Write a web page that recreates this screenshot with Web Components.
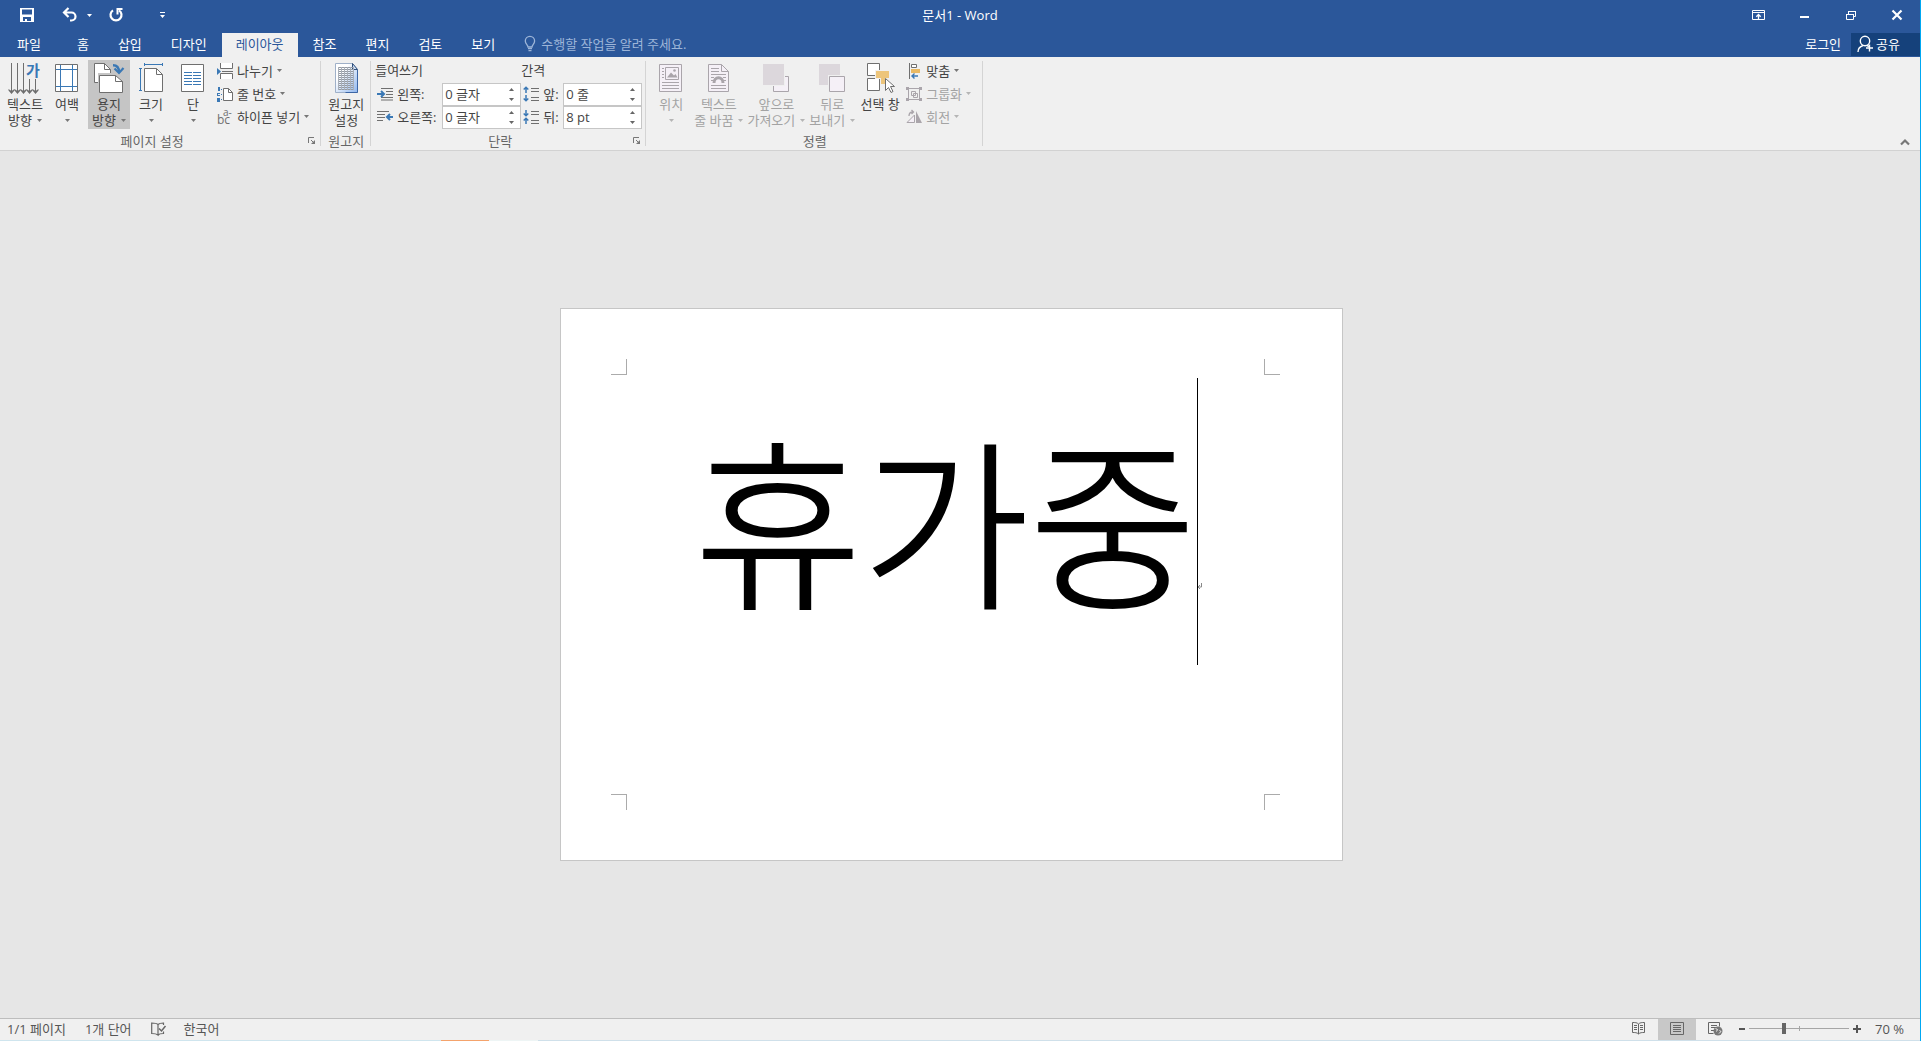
<!DOCTYPE html>
<html lang="ko">
<head>
<meta charset="utf-8">
<title>문서1 - Word</title>
<style>
  html, body { height: 100%; margin: 0; }
  body { font: 13px/16px "Open Sans", "Noto Sans CJK KR", sans-serif; color: #444; overflow: hidden; }
</style>
</head>
<body>
<word-window></word-window>

<script>
const RESET = `
  *, *::before, *::after { box-sizing: border-box; }
  :host { box-sizing: border-box; }
  button, input { font: inherit; color: inherit; margin: 0; border: 0; padding: 0; background: none; border-radius: 0; }
  button { cursor: default; }
  a { color: inherit; text-decoration: none; }
`;

function define(name, html, setup) {
  const template = document.createElement('template');
  template.innerHTML = html;
  customElements.define(name, class extends HTMLElement {
    constructor() {
      super();
      this.attachShadow({ mode: 'open' }).append(template.content.cloneNode(true));
    }
    connectedCallback() { if (setup) setup(this, this.shadowRoot); }
  });
}

/* Each entry: [width, height, drawing] */
const G = '#6f6f6f', B = '#3a78b5', D = '#aaa5ab', L = '#f5f0f7';
const arrowDown = (x, y) => `<path fill="${G}" d="M${x - 3} ${y - 4}l3 2 3-2v1.500l-3 3.500-3-3.500z"/>`;
const gridCells = () => {
  let s = '';
  for (let y = 5.5; y < 28; y += 4) s += `<path d="M8 ${y}h16M8 ${y + 2}h16" stroke="#949aa3"/>`;
  for (let x = 8.5; x < 25; x += 3) s += `<path d="M${x} 5v23" stroke="#a9afb8"/>`;
  return s;
};
const ICONS = {
  save: [16, 16, `<path fill="#fff" fill-rule="evenodd" d="M1 1h14v14H1zM3 2.500v5h10v-5zM4 10v4h2v-2h2v2h4v-4z"/>`],
  undo: [16, 16, `<path fill="none" stroke="#fff" stroke-width="2.200" d="M2 5.500h7.500a4 4 0 0 1 0 8H8M6.500 1 2 5.500l4.500 4.500"/>`],
  redo: [16, 16, `<path fill="none" stroke="#fff" stroke-width="2.200" d="M5 3.300a5.500 5.500 0 1 0 6 0"/><path fill="none" stroke="#fff" stroke-width="2" d="M14.500 2H9.500v5.500"/>`],
  custom: [7, 7, `<path fill="#fff" d="M1 0h5v1H1zM1 3h5L3.500 6z"/>`],
  caret: [5, 3, `<path fill="currentColor" d="M0 0h5L2.500 3z"/>`],
  ribbonopts: [14, 12, `<path fill="none" stroke="#fff" d="M.5 1.500h12v9H.5zM.5 3.500h12"/><path fill="none" stroke="#fff" stroke-width="1.300" d="M6.500 10V5.500M4.300 7.700l2.200-2.200 2.200 2.200"/>`],
  min: [10, 10, `<path fill="#fff" d="M0 6h9v2H0z"/>`],
  restore: [11, 11, `<path fill="none" stroke="#fff" d="M.5 4.500h7v5h-7zM2.500 4V1.500h7v5H8"/><path fill="#fff" d="M0 4h8v1H0zM2 1h8v1H2z"/>`],
  close: [12, 12, `<path stroke="#fff" stroke-width="2.200" d="M1.500 1.500l9 9M10.500 1.500l-9 9"/>`],
  bulb: [12, 16, `<path fill="none" stroke="#9db5d8" stroke-width="1.300" d="M4 11c0-2-2.700-3-2.700-6a4.600 4.600 0 0 1 9.300 0c0 3-2.600 4-2.600 6z"/><path stroke="#9db5d8" stroke-width="1.200" d="M4 12.700h4M4.500 14.700h3"/>`],
  share: [17, 18, `<circle cx="8" cy="6" r="4.700" fill="none" stroke="#fff" stroke-width="1.400"/><path fill="none" stroke="#fff" stroke-width="1.400" d="M1 17c0-4 2-5.500 5-6.500M10 10.500l2 1"/><path stroke="#fff" stroke-width="1.400" d="M12.500 9.500v7M9 13h7"/>`],

  textdir: [32, 32, `<path stroke="${G}" d="M2.500 1v29M8.500 1v29M14.500 1v29M20.500 17v13M26.500 17v13"/>${[2.5, 8.5, 14.5, 20.5, 26.5].map(x => arrowDown(x, 31)).join('')}<text x="17" y="14" font-size="15" font-weight="700" fill="${B}" font-family="Noto Sans CJK KR, sans-serif">가</text>`],
  margins: [32, 32, `<path fill="#fff" stroke="${G}" d="M4.500 2.500h22v27h-22z"/><path stroke="${B}" d="M9.500 3v26M21.500 3v26M5 7.500h21M5 24.500h21"/>`],
  orient: [32, 32, `<path fill="#fff" stroke="${G}" d="M1.500 20.500v-19h10l6 6v13z"/><path fill="none" stroke="${G}" d="M11.500 1.500v6h6"/><path fill="#c5c5c5" d="M5 11h15v3h-13v16H5z"/><path fill="#fff" stroke="${G}" d="M6.500 30.500v-17h16l7 6v11z"/><path fill="none" stroke="${G}" d="M22.500 13.500v6h7"/><path fill="none" stroke="${B}" stroke-width="2.400" d="M20 3.200c4 0 6 1.800 6 7"/><path fill="none" stroke="${B}" stroke-width="2.200" d="M21.500 6.500l4.500 4.500 4.500-5"/>`],
  size: [32, 32, `<path fill="#fff" stroke="${G}" d="M9.500 29.500v-23h12l6 6v17z"/><path fill="none" stroke="${G}" d="M21.500 6.500v6h6"/><path fill="none" stroke="${B}" d="M9 2.500h19M9.500 1v3M27.500 1v3M5.500 6v23M4 6.500h3M4 28.500h3"/>`],
  columns: [32, 32, `<path fill="#fff" stroke="${G}" d="M4.500 2.500h22v27h-22z"/><path stroke="${B}" d="M7 10.500h8M7 13.500h8M7 16.500h8M7 19.500h8M7 22.500h8M16 10.500h8M16 13.500h8M16 16.500h8M16 19.500h8M16 22.500h8"/>`],
  manuscript: [32, 32, `<defs><linearGradient id="g" x1="0" y1="0" x2="1" y2="1"><stop offset=".3" stop-color="#fff"/><stop offset="1" stop-color="#8fb6ee"/></linearGradient></defs><path fill="url(#g)" stroke="#9fb0c8" d="M5.500 30.500v-29h17l5 6v23z"/><path fill="none" stroke="#3c66a5" d="M27.500 8v22.500h-12"/><path fill="#cfe0f7" stroke="#2f4f7c" d="M22.500 1.500v6h5z"/>${gridCells()}`],
  position: [32, 32, `<path fill="${L}" stroke="${D}" d="M4.500 2.500h22v27h-22z"/><path fill="${L}" stroke="${D}" d="M10.500 5.500h13v12h-13z"/><path fill="${D}" d="M12 15.500l4-5 3 3 1.500-1.500 2 3.500z"/><circle cx="19.500" cy="8.500" r="1.300" fill="${D}"/><path stroke="${D}" d="M7 6.500h2M7 9.500h2M7 12.500h2M7 15.500h2M7 20.500h17M7 23.500h17M7 26.500h17"/>`],
  wrap: [32, 32, `<path fill="${L}" stroke="${D}" d="M5.500 29.500v-27h13l7 7v20z"/><path fill="none" stroke="${D}" d="M18.500 2.500v7h7M8 6.500h8M8 9.500h8M8 12.500h15M8 15.500h3M20 15.500h3M8 18.500h2M21 18.500h2M8 23.500h15M8 26.500h15"/><path fill="none" stroke="${D}" stroke-width="3" d="M11 21c0-7 9-7 9 0"/>`],
  forward: [32, 32, `<path fill="${L}" stroke="${D}" d="M13.500 14.500h15v15h-15z"/><path fill="#f0f0f0" d="M3 1h22v23H3z"/><path fill="#dcd7dc" d="M3 2h21v21H3z"/>`],
  backward: [32, 32, `<path fill="#dcd7dc" d="M3 2h21v21H3z"/><path fill="#f0f0f0" d="M12 13h18v18H12z"/><path fill="${L}" stroke="${D}" d="M13.500 14.500h15v15h-15z"/>`],
  selection: [32, 32, `<path fill="#fff" stroke="${G}" d="M3.500 1.500h12v12h-12zM3.500 16.500h12v12h-12z"/><path fill="#f0f0f0" d="M11 8h15v9H11z"/><path fill="#edc57b" d="M12 9h13v7h-4v6h-4v-6h-5z"/><path fill="#fff" stroke="${G}" d="M21.500 16.500v12l3-3 2.500 5 2-1-2.500-5h4z"/>`],

  breaks: [16, 16, `<path fill="#fff" stroke="${G}" d="M3.500 0v5.500h12V0M3.500 16v-5.500h12V16"/><path stroke="${G}" d="M5 8.500h11"/><path fill="${B}" d="M0 5l4 3.500L0 12z"/>`],
  lines: [16, 16, `<path fill="#fff" stroke="${G}" d="M6.500 14.500v-12h5l4 4v8z"/><path fill="none" stroke="${G}" d="M11.500 2.500v4h4"/><path fill="${B}" d="M1 1h2v4H1zM0 7h3v1H1v1h2v1H0zM0 12h3v4H0zM4 3h1v1H4zM4 8h1v1H4zM4 13h1v1H4z"/>`],
  hyphen: [16, 16, `<text x="0" y="15" font-size="12" fill="${G}" font-family="Open Sans, sans-serif">bc<tspan x="6" y="7" font-size="10">a-</tspan></text>`],
  indleft: [16, 14, `<path stroke="${G}" d="M4 1.500h12M9 4.500h7M9 7.500h7M4 10.500h12M4 13h12"/><path fill="none" stroke="${B}" stroke-width="2" d="M0 7h6M4 4l3 3-3 3"/>`],
  indright: [16, 14, `<path stroke="${G}" d="M0 1.500h12M0 4.500h8M0 7.500h8M0 10.500h6"/><path fill="none" stroke="${B}" stroke-width="2" d="M16 7h-5M13 4l-3 3 3 3"/>`],
  before: [16, 16, `<path stroke="${G}" d="M8 2.500h8M8 5.500h8M8 11.500h8M8 14.500h8"/><path fill="none" stroke="${B}" stroke-width="1.500" d="M3 1v6M.7 3.500L3 1.200l2.300 2.300M3 9v6M.7 12.500L3 14.800l2.300-2.300"/>`],
  after: [16, 16, `<path stroke="${G}" d="M8 2.500h8M8 5.500h8M8 11.500h8M8 14.500h8"/><path fill="none" stroke="${B}" stroke-width="1.500" d="M3 1v6M.7 4.500L3 6.800l2.300-2.300M3 9v6M.7 11.500L3 9.200l2.300 2.300"/>`],
  align: [16, 16, `<path stroke="${G}" d="M3.500 0v16"/><path fill="#fff" stroke="${G}" d="M5.500 1.500h5v3h-5z"/><path fill="#e9b964" d="M5 6h9v4H5z"/><path fill="none" stroke="${B}" stroke-width="1.400" d="M5.500 13h6.500M8.500 10.500L6 13l2.500 2.500"/>`],
  group: [16, 16, `<path fill="none" stroke="${D}" d="M2.500 3.500v9M13.500 3.500v9M3 2.500h10M3 13.500h10M5.500 5.500h4v4h-4zM7.500 7.500h4v4h-4z"/><path fill="${D}" d="M0 1h3v3H0zM13 1h3v3h-3zM0 12h3v3H0zM13 12h3v3h-3z"/>`],
  rotate: [16, 16, `<path fill="${L}" stroke="${D}" d="M1 13.500h7.500V6z"/><path fill="${D}" d="M10 2l6 12h-6z"/><path fill="none" stroke="${D}" stroke-width="1.300" d="M3 7c0-3 1-4 4-4M5.500 1L7.500 3l-2 2"/>`],

  launcher: [8, 8, `<path fill="none" stroke="#777" d="M.5 6V.5H6M3 3l3 3"/><path fill="#777" d="M7 3v4H3z"/>`],
  collapse: [10, 7, `<path fill="none" stroke="#777" stroke-width="2.200" d="M1 5.500l4-4 4 4"/>`],
  up: [5, 3, `<path fill="#666" d="M0 3h5L2.500 0z"/>`],
  down: [5, 3, `<path fill="#666" d="M0 0h5L2.500 3z"/>`],
  enter: [6, 8, `<path fill="none" stroke="#888" d="M4.500 0v4H1M3 2L1 4l2 2"/>`],

  proof: [15, 14, `<path fill="none" stroke="#666" stroke-width="1.200" d="M7 2.500C5.500 1 3 1 .7 1v10.500c2.500 0 4.500 0 6.300 1.500V2.500C8.500 1 10 1 12.500 1v2M7 13c1-1.200 3-1.500 5.500-1.500v-2"/><path fill="none" stroke="#666" stroke-width="1.500" d="M8 6.500l2.500 2.500 4-5"/>`],
  read: [14, 13, `<path fill="none" stroke="#666" d="M6.500 2C5 .5 3 .5.500.5v10c2.500 0 4.500 0 6 1.500zm0 0C8 .5 10 .5 12.500.5v10c-2.500 0-4.500 0-6 1.500M2 3.500h3M2 5.500h3M2 7.500h3M8 3.500h3M8 5.500h3M8 7.500h3"/>`],
  print: [14, 13, `<path fill="none" stroke="#666" d="M.5.5h13v12H.5zM3 3.500h8M3 5.500h8M3 7.500h8M3 9.500h8"/>`],
  web: [15, 14, `<path fill="none" stroke="#666" d="M5.500 11.500h-5V.5h11v4M3 3.500h6M3 5.500h5M3 8.500h3"/><circle cx="10" cy="9" r="4.500" fill="#777"/><path stroke="#f0f0f0" fill="none" d="M7.500 6.500l2 1-1 2M11.500 8.500l1.500 1-2 2"/>`],
  minus: [6, 8, `<path fill="#555" d="M0 3h6v2H0z"/>`],
  plus: [8, 8, `<path fill="#555" d="M3 0h2v3h3v2H5v3H3V5H0V3h3z"/>`]
};

define('wd-icon', `<style>:host{display:block;flex:none;line-height:0} svg{display:block;overflow:visible}</style>`, (host, root) => {
  if (root.querySelector('svg')) return;
  const [w, h, art] = ICONS[host.getAttribute('name')];
  root.append(document.createRange().createContextualFragment(
    `<svg width="${w}" height="${h}" viewBox="0 0 ${w} ${h}" aria-hidden="true">${art}</svg>`));
});

/* Title bar: quick access tools, document name, window controls */
define('title-bar', `<style>${RESET}
  :host { display: grid; grid-template-columns: 1fr auto 1fr; height: 33px; color: #fff; }
  .quick, .controls { display: flex; align-items: center; height: 30px; }
  .quick { padding-left: 15px; }
  .controls { justify-content: flex-end; }
  .name { padding-top: 7px; }
  button { display: flex; align-items: center; justify-content: center; height: 30px; width: 24px; }
  .controls button { width: 46px; }
  .undo { margin-left: 19px; }
  .drop { width: 11px; margin-left: 2px; }
  .redo { margin-left: 9px; }
  .more { margin-left: 22px; }
</style>
<div class="quick">
  <button aria-label="저장"><wd-icon name="save"></wd-icon></button>
  <button class="undo" aria-label="실행 취소"><wd-icon name="undo"></wd-icon></button>
  <button class="drop" aria-label="실행 취소 목록"><wd-icon name="caret"></wd-icon></button>
  <button class="redo" aria-label="다시 실행"><wd-icon name="redo"></wd-icon></button>
  <button class="more" aria-label="빠른 실행 도구 모음 사용자 지정"><wd-icon name="custom"></wd-icon></button>
</div>
<div class="name"><slot></slot></div>
<div class="controls">
  <button aria-label="리본 메뉴 표시 옵션"><wd-icon name="ribbonopts"></wd-icon></button>
  <button aria-label="최소화"><wd-icon name="min"></wd-icon></button>
  <button aria-label="이전 크기로 복원"><wd-icon name="restore"></wd-icon></button>
  <button aria-label="닫기"><wd-icon name="close"></wd-icon></button>
</div>`);

define('ribbon-tab', `<style>${RESET}
  :host { display: block; margin-right: 1px; }
  :host([file]) { margin-right: 5px; }
  a { display: flex; align-items: center; justify-content: center; height: 24px; padding: 0 14px 3px; color: #fff; }
  :host([file]) a { padding: 0 17px 2px; }
  :host([selected]) a { background: #f0f0f0; color: #2b579a; }
</style><a href="#"><slot></slot></a>`);

define('tab-strip', `<style>${RESET}
  :host { display: flex; height: 24px; color: #fff; }
  nav { display: flex; }
  .tell { display: flex; align-items: center; gap: 5px; margin-left: 14px; flex: 1; padding-bottom: 3px; }
  input { width: 240px; height: 20px; padding: 0; outline: 0; }
  input::placeholder { color: #9db5d8; opacity: 1; }
  .login { padding: 0 10px 3px; }
  .share { display: flex; align-items: center; gap: 2px; background: #15417b; height: 23px; padding: 0 20px 1px 6px; }
</style>
<nav><slot></slot></nav>
<label class="tell"><wd-icon name="bulb"></wd-icon><input type="text" aria-label="수행할 작업" placeholder="수행할 작업을 알려 주세요."></label>
<button class="login">로그인</button>
<button class="share"><wd-icon name="share"></wd-icon>공유</button>`);

define('ribbon-group', `<style>${RESET}
  :host { position: relative; display: flex; flex-direction: column; padding: 3px 4px 0; }
  :host::after { content: ""; position: absolute; right: 0; top: 4px; bottom: 4px; width: 1px; background: #d4d4d4; }
  .body { display: flex; height: 69px; }
  footer { display: flex; align-items: center; height: 22px; padding-top: 2px; color: #666; }
  footer span { flex: 1; text-align: center; }
  footer button { display: none; width: 14px; height: 14px; align-items: center; justify-content: center; margin: 0 -2px 0 5px; }
  :host([launcher]) footer button { display: flex; }
</style>
<div class="body"><slot></slot></div>
<footer><span></span><button><wd-icon name="launcher"></wd-icon></button></footer>`, (host, root) => {
  const label = host.getAttribute('label');
  root.querySelector('span').textContent = label;
  root.querySelector('button').setAttribute('aria-label', label + ' 대화 상자');
});

define('big-button', `<style>${RESET}
  :host { display: block; }
  button { display: flex; flex-direction: column; align-items: center; min-width: 42px; height: 69px; padding: 2px 2px 0; white-space: nowrap; }
  :host([wide]) button { min-width: 46px; }
  wd-icon { margin-bottom: 2px; }
  .line { display: flex; align-items: center; justify-content: center; gap: 5px; height: 16px; }
  .line wd-icon { margin: 0; color: #777; }
  :host([active]) button { background: #c5c5c5; }
  button:disabled { color: #a3a3a3; }
  button:disabled .line wd-icon { color: #b5b5b5; }
</style>
<button><span class="art"></span><span class="line one"><slot></slot></span><span class="line two"><slot name="second"></slot></span></button>`, (host, root) => {
  root.querySelector('.art').innerHTML = `<wd-icon name="${host.getAttribute('icon')}"></wd-icon>`;
  if (host.hasAttribute('menu') && !root.querySelector('.two wd-icon'))
    root.querySelector('.two').insertAdjacentHTML('beforeend', '<wd-icon name="caret"></wd-icon>');
  if (!host.querySelector('[slot=second]')) root.querySelector('.two slot').remove();
  root.querySelector('button').disabled = host.hasAttribute('disabled');
});

define('small-button', `<style>${RESET}
  :host { display: block; }
  button { display: flex; align-items: center; gap: 4px; height: 23px; padding: 0 8px 2px 3px; white-space: nowrap; }
  .drop { color: #777; }
  button:disabled { color: #a3a3a3; }
  button:disabled .drop { color: #b5b5b5; }
</style>
<button><span class="art"></span><slot></slot><wd-icon class="drop" name="caret"></wd-icon></button>`, (host, root) => {
  root.querySelector('.art').innerHTML = `<wd-icon name="${host.getAttribute('icon')}"></wd-icon>`;
  root.querySelector('button').disabled = host.hasAttribute('disabled');
});

define('button-stack', `<style>:host{display:flex;flex-direction:column}</style><slot></slot>`);

define('field-column', `<style>
  :host { display: flex; flex-direction: column; width: 146px; }
  :host([narrow]) { width: 121px; }
  .head { height: 23px; line-height: 20px; }
</style><div class="head"></div><slot></slot>`, (host, root) => {
  root.querySelector('.head').textContent = host.getAttribute('label');
});

define('spin-field', `<style>${RESET}
  :host { display: flex; align-items: center; gap: 4px; height: 23px; padding-left: 2px; }
  .art { padding-bottom: 1px; }
  label { flex: 1; white-space: nowrap; padding-bottom: 2px; }
  .box { display: flex; width: 79px; height: 23px; border: 1px solid #c6c6c6; background: #fff; }
  input { width: 60px; padding: 0 0 2px 2px; outline: 0; }
  .steps { display: flex; flex-direction: column; flex: 1; }
  .steps button { flex: 1; display: flex; align-items: center; justify-content: center; }
</style>
<span class="art"></span><label for="value"></label>
<div class="box"><input id="value" type="text" role="spinbutton">
<div class="steps"><button aria-label="늘리기"><wd-icon name="up"></wd-icon></button><button aria-label="줄이기"><wd-icon name="down"></wd-icon></button></div></div>`, (host, root) => {
  root.querySelector('.art').innerHTML = `<wd-icon name="${host.getAttribute('icon')}"></wd-icon>`;
  root.querySelector('label').textContent = host.getAttribute('label');
  root.querySelector('input').value = host.getAttribute('value');
});

define('ribbon-bar', `<style>${RESET}
  :host { display: flex; height: 94px; background: #f0f0f0; border-bottom: 1px solid #d2d2d2; }
  .collapse { align-self: flex-end; width: 20px; height: 16px; margin: 0 5px 0 auto; display: flex; align-items: center; justify-content: center; }
</style><slot></slot><button class="collapse" aria-label="리본 메뉴 축소"><wd-icon name="collapse"></wd-icon></button>`);

/* A sheet of paper with crop marks at the corners of its text area */
define('document-page', `<style>${RESET}
  :host { display: grid; grid-template: 66px 1fr 66px / 66px 1fr 78px; width: 783px; height: 553px; border: 1px solid #c6c6c6; background: #fff; }
  i { width: 16px; height: 16px; border: 0 solid #ababab; }
  .tl { grid-area: 1 / 1; place-self: end; border-width: 0 1px 1px 0; }
  .tr { grid-area: 1 / 3; place-self: end start; border-width: 0 0 1px 1px; }
  .bl { grid-area: 3 / 1; place-self: start end; border-width: 1px 1px 0 0; }
  .br { grid-area: 3 / 3; place-self: start; border-width: 1px 0 0 1px; }
  .text { grid-area: 2 / 2; display: flex; justify-content: center; padding-top: 3px; outline: 0;
    font: 300 182px/276px "Noto Sans CJK KR", sans-serif; -webkit-text-stroke: 2px #000; color: #000; white-space: nowrap; }
  .caret { position: relative; width: 1px; height: 287px; margin-right: -1px; background: #000; }
  .caret wd-icon { position: absolute; left: 0; top: 205px; }
</style>
<i class="tl"></i><i class="tr"></i><i class="bl"></i><i class="br"></i>
<div class="text" role="textbox" aria-multiline="true" aria-label="문서 본문"><div><slot></slot></div><div class="caret"><wd-icon name="enter"></wd-icon></div></div>`);

define('status-bar', `<style>${RESET}
  :host { display: flex; align-items: stretch; height: 22px; background: #f0f0f0; border-top: 1px solid #bdbdbd; color: #555; }
  button { display: flex; align-items: center; padding: 0 9px 2px; white-space: nowrap; }
  .left { display: flex; flex: 1; }
  .left button:first-child { padding-left: 7px; padding-right: 10px; }
  .left button:nth-child(3) { padding-left: 10px; }
  .view { width: 38px; justify-content: center; padding: 0 0 2px; }
  .view[aria-pressed=true] { background: #c8c8c8; }
  .zoom { display: flex; align-items: center; margin-left: 5px; }
  .zoom .step { height: 21px; padding: 0 4px 2px 0; }
  .zoom .step:last-child { padding: 0 0 2px 4px; }
  input { appearance: none; width: 100px; height: 19px; margin-bottom: 2px; outline: 0;
    background: linear-gradient(#a6a6a6, #a6a6a6) 50% 50% / 1px 5px no-repeat, linear-gradient(#a6a6a6, #a6a6a6) 0 50% / 100% 1px no-repeat; }
  input::-webkit-slider-thumb { appearance: none; width: 4px; height: 11px; background: #666; }
  .percent { padding: 0 16px 2px 14px; }
</style>
<div class="left">
  <button>1/1 페이지</button><button>1개 단어</button>
  <button aria-label="맞춤법 검사"><wd-icon name="proof"></wd-icon></button><button>한국어</button>
</div>
<button class="view" aria-label="읽기 모드"><wd-icon name="read"></wd-icon></button>
<button class="view" aria-pressed="true" aria-label="인쇄 모양"><wd-icon name="print"></wd-icon></button>
<button class="view" aria-label="웹 모양"><wd-icon name="web"></wd-icon></button>
<div class="zoom">
  <button class="step" aria-label="축소"><wd-icon name="minus"></wd-icon></button>
  <input type="range" min="0" max="100" value="34" aria-label="확대/축소">
  <button class="step" aria-label="확대"><wd-icon name="plus"></wd-icon></button>
</div>
<button class="percent">70 %</button>`);

define('word-window', `<style>${RESET}
  :host { display: flex; flex-direction: column; height: 100vh; background: #e6e6e6; border-right: 1px solid #00a8f3; }
  header { background: #2b579a; }
  main { flex: 1; display: flex; align-items: center; justify-content: center; padding-right: 17px; min-height: 0; }
  .edge { height: 1px; background: linear-gradient(90deg, #cfe5ee 441px, #f4a36c 441px 489px, #eef5f5 489px 538px, #cfe0ea 538px); }
</style>
<header>
  <title-bar>문서1 - Word</title-bar>
  <tab-strip>
    <ribbon-tab file>파일</ribbon-tab><ribbon-tab>홈</ribbon-tab><ribbon-tab>삽입</ribbon-tab><ribbon-tab>디자인</ribbon-tab><ribbon-tab selected>레이아웃</ribbon-tab><ribbon-tab>참조</ribbon-tab><ribbon-tab>편지</ribbon-tab><ribbon-tab>검토</ribbon-tab><ribbon-tab>보기</ribbon-tab>
  </tab-strip>
</header>
<ribbon-bar>
  <ribbon-group label="페이지 설정" launcher>
    <big-button icon="textdir" menu>텍스트<span slot="second">방향</span></big-button>
    <big-button icon="margins" menu>여백</big-button>
    <big-button icon="orient" menu active>용지<span slot="second">방향</span></big-button>
    <big-button icon="size" menu>크기</big-button>
    <big-button icon="columns" menu>단</big-button>
    <button-stack>
      <small-button icon="breaks">나누기</small-button>
      <small-button icon="lines">줄 번호</small-button>
      <small-button icon="hyphen">하이픈 넣기</small-button>
    </button-stack>
  </ribbon-group>
  <ribbon-group label="원고지">
    <big-button icon="manuscript">원고지<span slot="second">설정</span></big-button>
  </ribbon-group>
  <ribbon-group label="단락" launcher>
    <field-column label="들여쓰기">
      <spin-field icon="indleft" label="왼쪽:" value="0 글자"></spin-field>
      <spin-field icon="indright" label="오른쪽:" value="0 글자"></spin-field>
    </field-column>
    <field-column label="간격" narrow>
      <spin-field icon="before" label="앞:" value="0 줄"></spin-field>
      <spin-field icon="after" label="뒤:" value="8 pt"></spin-field>
    </field-column>
  </ribbon-group>
  <ribbon-group label="정렬">
    <big-button icon="position" menu disabled>위치</big-button>
    <big-button icon="wrap" menu disabled>텍스트<span slot="second">줄 바꿈</span></big-button>
    <big-button icon="forward" menu disabled>앞으로<span slot="second">가져오기</span></big-button>
    <big-button icon="backward" menu disabled>뒤로<span slot="second">보내기</span></big-button>
    <big-button icon="selection" wide>선택 창</big-button>
    <button-stack>
      <small-button icon="align">맞춤</small-button>
      <small-button icon="group" disabled>그룹화</small-button>
      <small-button icon="rotate" disabled>회전</small-button>
    </button-stack>
  </ribbon-group>
</ribbon-bar>
<main><document-page>휴가중</document-page></main>
<status-bar></status-bar>
<div class="edge"></div>`);
</script>
</body>
</html>
